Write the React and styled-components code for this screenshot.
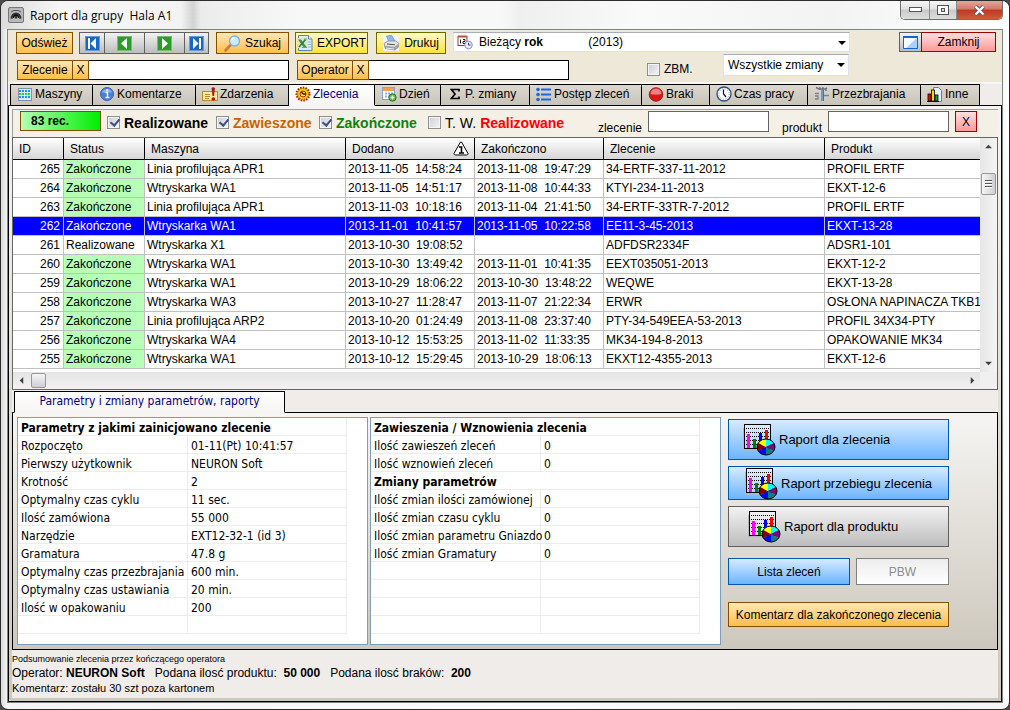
import React, {useState} from 'react';
import styled, {createGlobalStyle} from "styled-components";

const GlobalStyle = createGlobalStyle`
  * {
    box-sizing: border-box;
  }

  body {
    margin: 0;
    background: #4a4a4a;
    font-family: "Liberation Sans", Arial, sans-serif;
    font-size: 12px;
    color: #000;
  }

  button, input, select {
    font-family: inherit;
    font-size: inherit;
    color: inherit;
    margin: 0;
    padding: 0;
    border-radius: 0;
  }
`

const Window = styled.div`
  min-height: 100vh;
  display: flex;
  flex-direction: column;
  padding: 0 6px 6px;
  border: 1px solid #2c2c2c;
  border-radius: 8px;
  background: linear-gradient(90deg, #d9d9d9 0, #f4f4f4 6px, #fbfbfb 50%, #f4f4f4 99%, #fff 100%);
`

const TitleBar = styled.header`
  height: 28px;
  display: flex;
  align-items: center;
  margin: 0 -6px;
  padding-left: 7px;
  border-radius: 8px 8px 0 0;
  background: linear-gradient(90deg, #dcdcdc 0, #f6f6f6 60px, #f3f3f3 180px, #d2d2d2 192px, #ececec 200px, #f8f8f8 300px, #f8f8f8 500px, #efefef 520px, #fafafa 640px, #f3f3f3 830px, #fff 100%);
`

const Title = styled.h1`
  flex: 1;
  margin: 0 0 0 6px;
  font-family: "Open Sans", "Noto Sans", sans-serif;
  font-size: 12px;
  font-weight: normal;
  white-space: pre;
`

const WindowButtons = styled.div`
  align-self: flex-start;
  display: flex;
  margin-right: 6px;
  border: 1px solid #6e6e6e;
  border-top: 0;
  border-radius: 0 0 5px 5px;
  overflow: hidden;
`

const WindowButton = styled.button`
  width: ${p => p.$width}px;
  height: 18px;
  display: flex;
  align-items: center;
  justify-content: center;
  border: 0;
  border-left: ${p => p.$first ? 0 : "1px solid #8a8a8a"};
  background: ${p => p.$close
    ? "linear-gradient(#e3a79c 0, #d2796a 45%, #bd3a22 50%, #cf5a3c 100%)"
    : "linear-gradient(#f5f5f5 0, #e2e2e2 45%, #c8c8c8 50%, #dedede 100%)"};
`

const Client = styled.main`
  flex: 1;
  display: flex;
  flex-direction: column;
  border: 1px solid #7d8581;
  background: #f0ece9;
`

const Toolbar = styled.div`
  height: 54px;
  padding: 2px 6px 0 8px;
  background: #eee8d9;
  border-bottom: 2px solid #f8f7f5;
`

const ToolRow = styled.div`
  display: flex;
  height: 22px;
`

const LookupRow = styled.div`
  display: flex;
  align-items: flex-end;
  gap: 8px;
  height: 26px;
  padding: 0 147px 0 1px;
`

const tones = {
    orange: ["#805000", "#ffe7b8", "#ffbe48"],
    yellow: ["#6f6a00", "#fffbc8", "#ffe23a"],
    grey: ["#606060", "#f2f2f2", "#bdbdbd"],
    red: ["#a00000", "#ffe0e0", "#ff9898"],
    blue: ["#0058b0", "#d6ebff", "#6cb4ff"],
    white: ["#808080", "#ededed", "#ffffff"],
}

const Button = styled.button`
  height: ${p => p.$height || 22}px;
  width: ${p => p.$width ? p.$width + "px" : "auto"};
  flex: ${p => p.$grow ? 1 : "none"};
  display: flex;
  align-items: center;
  justify-content: center;
  gap: 4px;
  margin-left: ${p => p.$joined ? "-1px" : 0};
  border: 1px solid ${p => tones[p.$tone][0]};
  background: linear-gradient(${p => tones[p.$tone][1]}, ${p => tones[p.$tone][2]});
  font-size: 12px;
  white-space: nowrap;

  &:disabled {
    color: #8c8c8c;
  }
`

const Group = styled.div`
  display: flex;
  margin-left: ${p => p.$before || 0}px;
  margin-right: ${p => p.$after || 0}px;
`

const Combo = styled.div`
  position: relative;
  flex: ${p => p.$grow ? 1 : "none"};
  align-self: flex-start;
  width: ${p => p.$width ? p.$width + "px" : "auto"};
  height: ${p => p.$height}px;
  background: #fff;

  &::after {
    content: "";
    position: absolute;
    right: 4px;
    top: 9px;
    border: 4px solid transparent;
    border-top-color: #000;
    border-bottom: 0;
    pointer-events: none;
  }
`

const Select = styled.select`
  width: 100%;
  height: 100%;
  padding-left: 4px;
  appearance: none;
  border: 1px solid #e0e2ea;
  border-top-color: #abadb3;
  background: transparent;
  color: ${p => p.$hideText ? "transparent" : "#000"};

  option {
    color: #000;
  }
`

const ComboFace = styled.span`
  position: absolute;
  inset: 0;
  display: flex;
  align-items: center;
  padding-left: 4px;
  pointer-events: none;
  white-space: pre;

  svg {
    margin-right: 6px;
  }

  b {
    width: 64px;
  }
`

const TextBox = styled.input`
  width: ${p => p.$width}px;
  height: ${p => p.$height || 20}px;
  padding: 0 3px;
  border: 1px solid ${p => p.$soft ? "#646464" : "#000"};
  border-left-width: ${p => p.$joined ? 0 : 1}px;
  background: #fff;
  outline: 0;
`

const CheckBox = styled.input`
  flex: none;
  width: 13px;
  height: 13px;
  appearance: none;
  border: 1px solid #8e8f8f;
  background: linear-gradient(135deg, #c9ced4, #f6f6f6);
  box-shadow: inset 0 0 0 1px #f4f4f4;

  &:checked::after {
    content: "";
    display: block;
    width: 4px;
    height: 7px;
    margin: 0 0 0 4px;
    border: solid #3c4f86;
    border-width: 0 2px 2px 0;
    transform: rotate(40deg);
  }
`

const CheckLabel = styled.label`
  display: flex;
  align-items: center;
  gap: 4px;
  width: ${p => p.$width}px;
  height: 22px;
  flex: none;
  margin-left: ${p => p.$push ? "auto" : 0};
`

const CheckText = styled.span`
  margin-top: 2px;
  font-size: 14px;
  font-weight: bold;
  color: ${p => p.$color || "#000"};
  white-space: nowrap;

  i {
    font-style: normal;
    font-weight: normal;
    color: #000;
    margin-right: 4px;
  }
`

const Tabs = styled.div`
  display: flex;
  height: 22px;
  padding-left: ${p => p.$indent}px;
  background: linear-gradient(#000, #000) bottom / 100% 1px no-repeat;
`

const Tab = styled.button`
  width: ${p => p.$width}px;
  height: 22px;
  flex: none;
  display: flex;
  align-items: center;
  justify-content: ${p => p.$centered ? "center" : "flex-start"};
  gap: 2px;
  padding: 0 0 2px ${p => p.$centered ? 0 : 6}px;
  border: 1px solid #000;
  border-left-width: ${p => p.$first ? 1 : 0}px;
  border-bottom-color: ${p => p.$active ? "#f6f5f3" : "#000"};
  background: ${p => p.$active ? "linear-gradient(#fff, #f6f5f3)" : "linear-gradient(#dcd8d0, #c8c3b7)"};
  color: ${p => p.$active ? "#000080" : "#000"};
  font-family: ${p => p.$humanist ? '"DejaVu Sans Condensed", "Noto Sans", sans-serif' : "inherit"};
  white-space: nowrap;

  svg {
    flex: none;
  }
`

const Page = styled.section`
  flex: 1;
  display: flex;
  flex-direction: column;
  padding: 3px;
  border: 1px solid #000;
  border-top: 0;
  background: linear-gradient(#f6f5f3, #cdc8bd);
`

const PageBody = styled.div`
  flex: 1;
  display: flex;
  flex-direction: column;
  background: #f0ece9;
`

const FilterBar = styled.div`
  height: 28px;
  display: flex;
  align-items: flex-start;
  padding: 1px 21px 0 7px;
  border-top: 1px solid #a0a09c;
  border-left: 1px solid #a0a09c;
  background: #f5f0e6;
`

const Counter = styled.output`
  width: 81px;
  height: 20px;
  margin-right: 6px;
  padding-left: 10px;
  border: 1px solid #805000;
  background: linear-gradient(90deg, #b4ffb4, #00ee00);
  font-weight: bold;
  line-height: 18px;
`

const FilterField = styled.div`
  display: flex;
  margin-left: ${p => p.$push ? "auto" : "13px"};
`

const FieldLabel = styled.label`
  margin-right: 6px;
  line-height: 16px;
  padding-top: 9px;
`

const GridFrame = styled.div`
  height: 253px;
  display: grid;
  grid-template-columns: 1fr 17px;
  grid-template-rows: 1fr 17px;
  border: 1px solid #646464;
  background: #fff;
`

const GridView = styled.div`
  overflow: hidden;
`

const OrdersTable = styled.table`
  width: 100%;
  table-layout: fixed;
  border-spacing: 0;
  white-space: pre;
`

const HeadCell = styled.th`
  height: 22px;
  padding: 0 5px 0 6px;
  border-right: ${p => p.$last ? 0 : "1px solid #000"};
  border-bottom: 1px solid #000;
  background: linear-gradient(#fff, #d6d6d6);
  font-weight: normal;
  text-align: left;

  div {
    display: flex;
    align-items: center;
    justify-content: space-between;
  }
`

const Row = styled.tr`
  background: ${p => p.$selected ? "#0000ff" : "#fff"};
  color: ${p => p.$selected ? "#fff" : "#000"};
`

const Cell = styled.td`
  height: 19px;
  padding: 0 3px 0 2px;
  overflow: hidden;
  border-right: ${p => p.$last ? 0 : "1px solid #c0c0c0"};
  border-bottom: 1px solid #c0c0c0;
  background: ${p => p.$done ? "#b8ffb8" : "transparent"};
  text-align: ${p => p.$right ? "right" : "left"};
`

const VScroll = styled.div`
  display: flex;
  flex-direction: column;
  align-items: center;
  background: linear-gradient(90deg, #e6e6e6, #f4f4f4);
`

const HScroll = styled.div`
  display: flex;
  align-items: center;
  background: linear-gradient(#e4e4e4, #f2f2f2);
`

const Corner = styled.div`
  background: #f0f0f0;
`

const Arrow = styled.button`
  width: 16px;
  height: 17px;
  display: flex;
  align-items: center;
  justify-content: center;
  border: 0;
  background: transparent;
`

const Thumb = styled.div`
  width: 15px;
  height: ${p => p.$tall ? 22 : 15}px;
  margin: ${p => p.$tall ? "18px 0 auto" : "0 auto 0 2px"};
  display: flex;
  flex-direction: column;
  align-items: center;
  justify-content: center;
  gap: 1px;
  border: 1px solid #979797;
  border-radius: 2px;
  background: linear-gradient(${p => p.$tall ? "90deg, " : ""}#f5f5f5, #d0d0d4);

  span {
    width: 7px;
    height: 2px;
    background: #fff;
    border-top: 1px solid #555;
  }
`

const SubTabs = styled(Tabs)`
  margin-top: 1px;
`

const SubPage = styled.div`
  display: flex;
  align-items: flex-start;
  padding: 4px;
  border: 1px solid #000;
  border-top: 0;
  background: linear-gradient(#f6f5f3, #cdc8bd);
`

const InfoBox = styled.div`
  width: 351px;
  height: 228px;
  margin-right: 2px;
  border: 1px solid #7f9db9;
  background: #fff;
`

const InfoTable = styled.table`
  width: 329px;
  table-layout: fixed;
  border-spacing: 0;
  font-family: "DejaVu Sans Condensed", "Noto Sans", sans-serif;
  font-size: 12px;
  white-space: nowrap;

  th, td {
    height: 18px;
    padding: 4px 3px 0;
    line-height: 13px;
    border-right: 1px solid #ececec;
    border-bottom: 1px solid #ececec;
    text-align: left;
  }

  th[scope="row"] {
    padding-right: 0;
    font-weight: normal;
  }
`

const Actions = styled.div`
  width: 221px;
  margin: 2px 0 0 5px;
  display: flex;
  flex-direction: column;
`

const ReportButton = styled(Button)`
  justify-content: flex-start;
  gap: 3px;
  padding-left: ${p => p.$indent}px;
  margin-bottom: 6px;
  font-size: 13px;
`

const ActionRow = styled.div`
  display: flex;
  gap: 6px;
  margin: 5px 0 17px;
`

const Summary = styled.footer`
  padding-top: 3px;
`

const SummaryLine = styled.p`
  margin: 0;
  font-size: ${p => p.$size}px;
  line-height: ${p => p.$line}px;
  white-space: pre;
`

/* icons */

const AppIcon = () => (
    <svg width="16" height="16" viewBox="0 0 16 16">
        <rect x=".5" y=".5" width="15" height="15" rx="1.5" fill="#b9b9b9" stroke="#777"/>
        <path d="M2.500 11.500a5.500 6 0 0 1 11 0l-2 .5a3.500 4 0 0 0-7 0z" fill="#333"/>
        <path d="M5.500 11a2.500 3 0 0 1 5 0M8 8.500v3" stroke="#111" strokeWidth="1.500" fill="none"/>
        <path d="M3 5l3-1.500h4L13 5" stroke="#555" fill="none"/>
    </svg>
)

const NavIcon = ({color, dir, bar}) => (
    <svg width="15" height="15" viewBox="0 0 15 15">
        <rect width="15" height="15" fill={color}/>
        <rect x=".5" y=".5" width="14" height="14" fill="none" stroke="#fff" strokeOpacity=".35"/>
        <g transform={dir === "right" ? "matrix(-1 0 0 1 15 0)" : undefined}>
            <path d={bar ? "M11 2v11L5.500 7.500z" : "M10 2v11L4 7.500z"} fill="#fff"/>
            {bar && <rect x="3" y="2" width="2" height="11" fill="#fff"/>}
        </g>
    </svg>
)

const SearchIcon = () => (
    <svg width="17" height="17" viewBox="0 0 17 17">
        <path d="M1.500 15.500L7 9.500" stroke="#d9773a" strokeWidth="2.600" strokeLinecap="round"/>
        <circle cx="10.500" cy="6" r="5" fill="#c9ebff" stroke="#7fb2de" strokeWidth="1.400"/>
        <path d="M7.500 5.500a3 3 0 0 1 3-2.500" stroke="#fff" strokeWidth="1.400" fill="none"/>
    </svg>
)

const ExcelIcon = () => (
    <svg width="16" height="16" viewBox="0 0 16 16">
        <path d="M1.500.500h10l3.500 3.500v11.500H1.500z" fill="#dcecff" stroke="#5a86c0"/>
        <path d="M11.500.500V4H15" fill="#fff" stroke="#5a86c0"/>
        <path d="M10 7h4M10 9.500h4M10 12h4" stroke="#8fb4df"/>
        <rect x="0" y="3" width="11" height="10" fill="#d8e6d0"/>
        <path d="M1 4.500h3l5.500 7.500h-3z" fill="#3f8f46"/>
        <path d="M8.500 4.500L2 12" stroke="#2f7a38" strokeWidth="1.600"/>
        <path d="M5 12.500h5M7 4h3" stroke="#6aa66a"/>
    </svg>
)

const PrintIcon = () => (
    <svg width="17" height="16" viewBox="0 0 17 16">
        <rect width="16" height="16" fill="#f4f4f4"/>
        <path d="M3.500 1l5-1 3.500 6-6 2z" fill="#8fb8f0" stroke="#6a8fd0" strokeWidth=".6"/>
        <path d="M1 8.500L5 6l8 0 3 2.500-4 4-10-1z" fill="#e2e2e2" stroke="#8b8b8b" strokeWidth=".8"/>
        <path d="M1 11l10 1.500L16 9v3l-4 3.500L2 14z" fill="#9d9d9d"/>
        <path d="M4 9l8 .8" stroke="#555"/>
        <path d="M3 13l8 1" stroke="#eee"/>
        <rect x="12" y="12" width="2" height="1" fill="#d9c000"/>
    </svg>
)

const CalendarClockIcon = () => (
    <svg width="16" height="15" viewBox="0 0 16 15">
        <rect x="1" y="1.500" width="9" height="9" fill="#fff" stroke="#a03a28"/>
        <path d="M1 1.500h9" stroke="#b0523c" strokeWidth="2"/>
        <path d="M3.500 4.500v4M6 4.500h2v2H6v2h2.500" stroke="#222" fill="none"/>
        <circle cx="11.500" cy="10" r="3.800" fill="#e5eaff" stroke="#8b90c4"/>
        <path d="M11.500 7.800V10h2" stroke="#3c3c78" fill="none"/>
    </svg>
)

const MaximizeIcon = () => (
    <svg width="15" height="13" viewBox="0 0 15 13">
        <path d="M1 1h13v11H1z" fill="#f5faff"/>
        <path d="M14 2v10H3z" fill="#a9d0fa"/>
        <path d="M.500.500h14v12H.500z" fill="none" stroke="#1565d0"/>
        <path d="M0 1h15" stroke="#1565d0" strokeWidth="2"/>
    </svg>
)

const MachinesIcon = () => (
    <svg width="16" height="13" viewBox="-1 0 16 13">
        <rect x=".5" y=".5" width="13" height="12" fill="#d8ecff" stroke="#7a93b5"/>
        {[2, 5, 8].map(y => [2, 5, 8, 11].map(x => (
            <rect key={x + "-" + y} x={x - 1} y={y} width="2" height="2" fill={y === 5 ? "#2ecc40" : "#1e90ff"}/>
        )))}
    </svg>
)

const InfoIcon = () => (
    <svg width="16" height="14" viewBox="-1 0 16 14">
        <circle cx="7" cy="7" r="6.500" fill="#4a7fd6" stroke="#3c62ac"/>
        <path d="M1.800 5.500a5.500 5 0 0 1 10.400 0z" fill="#8db4f0"/>
        <path d="M5.500 5.500H7.500V10M5.500 10.500h4" stroke="#fff" strokeWidth="1.400" fill="none"/>
        <circle cx="7.300" cy="3.200" r="1.100" fill="#fff"/>
    </svg>
)

const EventsIcon = () => (
    <svg width="16" height="15" viewBox="0 0 16 15">
        <rect x=".5" y="4.500" width="15" height="9" fill="#ffe9a0" stroke="#c08a28"/>
        <path d="M3 7.500h5M3 9.500h5M3 11.500h4" stroke="#b98a30"/>
        <path d="M9.500 1q1.500-1.500 3.500 0l-1 8h-1.500z" fill="#b01818"/>
        <circle cx="11.300" cy="12" r="1.800" fill="#b01818"/>
    </svg>
)

const GearIcon = () => (
    <svg width="16" height="16" viewBox="0 0 16 16">
        <circle cx="8" cy="8" r="6.500" fill="#ffe000" stroke="#a02000" strokeWidth="2" strokeDasharray="1.500 1.200"/>
        <circle cx="8" cy="8" r="5.300" fill="none" stroke="#c03000" strokeWidth="1" strokeDasharray="1 1"/>
        <circle cx="8" cy="8" r="3" fill="#ffe860" stroke="#a01800"/>
        <path d="M8 8L6.500 6M8 8h3" stroke="#700" strokeWidth="1.300"/>
    </svg>
)

const DayIcon = () => (
    <svg width="16" height="15" viewBox="-1 0 16 15">
        <rect x=".5" y=".5" width="12" height="12" fill="#fff" stroke="#7fa6d8"/>
        <rect x="1" y="1" width="11" height="3" fill="#f0a050"/>
        <path d="M3 6.500h2M6 6.500h2M9 6.500h2M3 9.500h2M6 9.500h2" stroke="#8ab4e4" strokeWidth="2"/>
        <circle cx="10.500" cy="10.500" r="3.700" fill="#6aa84a" stroke="#3c7424"/>
        <path d="M10.500 8.500v4M8.500 10.500h4" stroke="#e4f4d8" strokeWidth="1.400"/>
    </svg>
)

const ShiftIcon = () => (
    <svg width="16" height="12" viewBox="-3 0 16 12">
        <path d="M9 3.500V1.500H1.500L5 6l-3.500 4.500H9V8.500" fill="none" stroke="#000" strokeWidth="1.700"/>
    </svg>
)

const ProgressIcon = () => (
    <svg width="16" height="15" viewBox="0 0 16 15">
        {[2.5, 7.5, 12.5].map(y => (
            <g key={y}>
                <circle cx="2" cy={y} r="1.800" fill="#1a66e8"/>
                <path d={`M5 ${y}h10`} stroke="#1a66e8" strokeWidth="2"/>
            </g>
        ))}
    </svg>
)

const DefectsIcon = () => (
    <svg width="16" height="15" viewBox="-1 0 16 15">
        <circle cx="7" cy="7.500" r="6.800" fill="#d81818" stroke="#901010" strokeWidth=".8"/>
        <path d="M1.500 7a5.500 5.500 0 0 1 11 0q-5.500 1.500-11 0z" fill="#f08080"/>
    </svg>
)

const ClockIcon = () => (
    <svg width="16" height="16" viewBox="0 0 16 16">
        <circle cx="8" cy="8" r="7" fill="#fff" stroke="#2d4a80" strokeWidth="1.300"/>
        <circle cx="8" cy="8" r="5.200" fill="none" stroke="#6c88b8" strokeDasharray="1 1.720"/>
        <path d="M7.500 3.500V8l2.500 3" stroke="#111" strokeWidth="1.200" fill="none"/>
    </svg>
)

const ToolsIcon = () => (
    <svg width="16" height="16" viewBox="0 0 16 16">
        <path d="M7 4h3v11H7z" fill="#2f78c4"/>
        <path d="M2 1.500l3 1.500h6l2-1M6 1v3M9 1v3M12 3v2" stroke="#6c7278" strokeWidth="1.400" fill="none"/>
        <path d="M1 7.500h4M1 10h3v3H1M10 9.500h5" stroke="#7d848a" strokeWidth="1.300" fill="none"/>
        <path d="M8 4v11" stroke="#90c4f4"/>
    </svg>
)

const OtherIcon = () => (
    <svg width="16" height="15" viewBox="0 0 16 15">
        <path d="M6.500.500h5l3 3v11h-8z" fill="#e6f0ff" stroke="#5d7fb5"/>
        <rect x="1" y="7" width="3" height="7" fill="#e01010" stroke="#000" strokeWidth=".8"/>
        <rect x="4.500" y="3" width="3" height="11" fill="#ffd800" stroke="#000" strokeWidth=".8"/>
        <rect x="8" y="8" width="3" height="6" fill="#20a020" stroke="#000" strokeWidth=".8"/>
        <path d="M0 14.500h12" stroke="#000"/>
    </svg>
)

const SortIcon = () => (
    <svg width="16" height="15" viewBox="0 0 16 15">
        <path d="M7.500 1L1 12.500q0 1.500 1.500 1.500h11q1.500 0 1.500-1.500L8.500 1z" fill="#fff" stroke="#000"/>
        <path d="M6 6h2.500v6M6 12h5" stroke="#000" strokeWidth="1.600" fill="none"/>
    </svg>
)

const wedges = ["#00ffff", "#800080", "#008080", "#0000ff", "#800000", "#ffff00"]

const ReportIcon = () => (
    <svg width="33" height="33" viewBox="1 1 33 33">
        <path d="M2 6v21.500h16" stroke="#b8b8b8" strokeWidth="2" fill="none"/>
        <rect x="2.500" y="2.500" width="26" height="24" fill="#fff" fillOpacity=".3" stroke="#000"/>
        <path d="M4 6.500h24M4 10.500h24M4 14.500h24M4 18.500h24M4 22.500h24" stroke="#000" strokeDasharray="1 1"/>
        <rect x="5" y="12" width="3" height="14" fill="#ff00ff"/>
        <rect x="11" y="17" width="3" height="9" fill="#008000"/>
        <rect x="17" y="11" width="3" height="15" fill="#0000ff"/>
        <rect x="23" y="8" width="3" height="18" fill="#ff0000"/>
        {wedges.map((fill, i) => {
            const a = (i * 60 - 90) * Math.PI / 180
            const b = (i * 60 - 30) * Math.PI / 180
            return (
                <path
                    key={fill}
                    d={`M24 25L${24 + 9 * Math.cos(a)} ${25 + 8 * Math.sin(a)}A9 8 0 0 1 ${24 + 9 * Math.cos(b)} ${25 + 8 * Math.sin(b)}z`}
                    fill={fill}
                />
            )
        })}
        <ellipse cx="24" cy="25" rx="9" ry="8" fill="none" stroke="#000"/>
    </svg>
)

const arrowPaths = {
    up: "M0 6l4-4 4 4z",
    down: "M0 2l4 4 4-4z",
    left: "M6 0L2 4l4 4z",
    right: "M2 0l4 4-4 4z",
}

const ArrowIcon = ({dir}) => (
    <svg width="7" height="7" viewBox="0 0 8 8"><path d={arrowPaths[dir]} fill="#404040"/></svg>
)

/* data */

const tabs = [
    {name: "Maszyny", width: 83, icon: <MachinesIcon/>},
    {name: "Komentarze", width: 103, icon: <InfoIcon/>},
    {name: "Zdarzenia", width: 93, icon: <EventsIcon/>},
    {name: "Zlecenia", width: 86, icon: <GearIcon/>},
    {name: "Dzień", width: 66, icon: <DayIcon/>},
    {name: "P. zmiany", width: 89, icon: <ShiftIcon/>},
    {name: "Postęp zleceń", width: 112, icon: <ProgressIcon/>},
    {name: "Braki", width: 68, icon: <DefectsIcon/>},
    {name: "Czas pracy", width: 98, icon: <ClockIcon/>},
    {name: "Przezbrajania", width: 113, icon: <ToolsIcon/>},
    {name: "Inne", width: 59, icon: <OtherIcon/>},
]

const columns = [
    {name: "ID", width: 51},
    {name: "Status", width: 81},
    {name: "Maszyna", width: 201},
    {name: "Dodano", width: 129, sorted: true},
    {name: "Zakończono", width: 129},
    {name: "Zlecenie", width: 221},
    {name: "Produkt"},
]

const orders = [
    [265, "Zakończone", "Linia profilująca APR1", "2013-11-05  14:58:24", "2013-11-08  19:47:29", "34-ERTF-337-11-2012", "PROFIL ERTF"],
    [264, "Zakończone", "Wtryskarka WA1", "2013-11-05  14:51:17", "2013-11-08  10:44:33", "KTYI-234-11-2013", "EKXT-12-6"],
    [263, "Zakończone", "Linia profilująca APR1", "2013-11-03  10:18:16", "2013-11-04  21:41:50", "34-ERTF-33TR-7-2012", "PROFIL ERTF"],
    [262, "Zakończone", "Wtryskarka WA1", "2013-11-01  10:41:57", "2013-11-05  10:22:58", "EE11-3-45-2013", "EKXT-13-28"],
    [261, "Realizowane", "Wtryskarka X1", "2013-10-30  19:08:52", "", "ADFDSR2334F", "ADSR1-101"],
    [260, "Zakończone", "Wtryskarka WA1", "2013-10-30  13:49:42", "2013-11-01  10:41:35", "EEXT035051-2013", "EKXT-12-2"],
    [259, "Zakończone", "Wtryskarka WA1", "2013-10-29  18:06:22", "2013-10-30  13:48:22", "WEQWE", "EKXT-13-28"],
    [258, "Zakończone", "Wtryskarka WA3", "2013-10-27  11:28:47", "2013-11-07  21:22:34", "ERWR", "OSŁONA NAPINACZA TKB1"],
    [257, "Zakończone", "Linia profilująca ARP2", "2013-10-20  01:24:49", "2013-11-08  23:37:40", "PTY-34-549EEA-53-2013", "PROFIL 34X34-PTY"],
    [256, "Zakończone", "Wtryskarka WA4", "2013-10-12  15:53:25", "2013-11-02  11:33:35", "MK34-194-8-2013", "OPAKOWANIE MK34"],
    [255, "Zakończone", "Wtryskarka WA1", "2013-10-12  15:29:45", "2013-10-29  18:06:13", "EKXT12-4355-2013", "EKXT-12-6"],
]

const startParams = [
    ["Parametry z jakimi zainicjowano zlecenie"],
    ["Rozpoczęto", "01-11(Pt) 10:41:57"],
    ["Pierwszy użytkownik", "NEURON Soft"],
    ["Krotność", "2"],
    ["Optymalny czas cyklu", "11 sec."],
    ["Ilość zamówiona", "55 000"],
    ["Narzędzie", "EXT12-32-1 (id 3)"],
    ["Gramatura", "47.8 g"],
    ["Optymalny czas przezbrajania", "600 min."],
    ["Optymalny czas ustawiania", "20 min."],
    ["Ilość w opakowaniu", "200"],
    ["", ""],
]

const changes = [
    ["Zawieszenia / Wznowienia zlecenia"],
    ["Ilość zawieszeń zleceń", "0"],
    ["Ilość wznowień zleceń", "0"],
    ["Zmiany parametrów"],
    ["Ilość zmian ilości zamówionej", "0"],
    ["Ilość zmian czasu cyklu", "0"],
    ["Ilość zmian parametru Gniazdo", "0"],
    ["Ilość zmian Gramatury", "0"],
    ["", ""],
    ["", ""],
    ["", ""],
    ["", ""],
]

const Lookup = ({name}) => (
    <Group>
        <Button $tone="orange" $height={20} $width={56} id={"pick-" + name}>{name}</Button>
        <Button $tone="orange" $height={20} $width={17} $joined aria-label={"Wyczyść " + name}>X</Button>
        <TextBox $width={200} $joined aria-labelledby={"pick-" + name}/>
    </Group>
)

const Info = ({rows}) => (
    <InfoBox>
        <InfoTable>
            <colgroup>
                <col width="170"/>
                <col/>
            </colgroup>
            <tbody>
            {rows.map((row, i) => (
                <tr key={i}>
                    {row.length === 1
                        ? <th colSpan={2} scope="colgroup">{row[0]}</th>
                        : <>
                            <th scope="row">{row[0]}</th>
                            <td>{row[1]}</td>
                        </>}
                </tr>
            ))}
            </tbody>
        </InfoTable>
    </InfoBox>
)

const App = () => {
    const [tab, setTab] = useState("Zlecenia")
    const [selected, setSelected] = useState(262)

    return (
        <Window>
            <GlobalStyle/>
            <TitleBar>
                <AppIcon/>
                <Title>{"Raport dla grupy  Hala A1"}</Title>
                <WindowButtons>
                    <WindowButton $width={28} $first aria-label="Minimalizuj">
                        <svg width="13" height="6"><rect x=".5" y=".5" width="12" height="4" fill="#fff" stroke="#555"/></svg>
                    </WindowButton>
                    <WindowButton $width={27} aria-label="Maksymalizuj">
                        <svg width="13" height="11">
                            <rect x=".5" y=".5" width="11" height="9" fill="#fff" stroke="#555"/>
                            <rect x="4.500" y="3.500" width="3" height="3" fill="#ddd" stroke="#555"/>
                        </svg>
                    </WindowButton>
                    <WindowButton $width={46} $close aria-label="Zamknij okno">
                        <svg width="13" height="11" viewBox="0 0 13 11">
                            <path d="M2.500 1.500l8 8M10.500 1.500l-8 8" stroke="#555" strokeWidth="4"/>
                            <path d="M2.500 1.500l8 8M10.500 1.500l-8 8" stroke="#fff" strokeWidth="2.400"/>
                        </svg>
                    </WindowButton>
                </WindowButtons>
            </TitleBar>
            <Client>
                <Toolbar>
                    <ToolRow>
                        <Group $after={6}><Button $tone="orange" $width={57}>Odśwież</Button></Group>
                        <Group $after={7}>
                            <Button $tone="grey" $width={26} aria-label="Pierwszy"><NavIcon color="#1668c8" bar/></Button>
                            <Button $tone="grey" $width={41} $joined aria-label="Poprzedni"><NavIcon color="#2c9a2c"/></Button>
                            <Button $tone="grey" $width={41} $joined aria-label="Następny"><NavIcon color="#2c9a2c" dir="right"/></Button>
                            <Button $tone="grey" $width={25} $joined aria-label="Ostatni"><NavIcon color="#1668c8" dir="right" bar/></Button>
                        </Group>
                        <Group $after={6}><Button $tone="orange" $width={73}><SearchIcon/>Szukaj</Button></Group>
                        <Group $after={8}><Button $tone="yellow" $width={73}><ExcelIcon/>EXPORT</Button></Group>
                        <Group $after={7}><Button $tone="yellow" $width={70}><PrintIcon/>Drukuj</Button></Group>
                        <Combo $grow $height={20}>
                            <Select $hideText aria-label="Okres">
                                <option>Bieżący rok (2013)</option>
                            </Select>
                            <ComboFace aria-hidden="true"><CalendarClockIcon/>Bieżący <b>rok</b>(2013)</ComboFace>
                        </Combo>
                        <Group $before={49}>
                            <Button $tone="grey" $height={20} $width={23} aria-label="Powiększ"><MaximizeIcon/></Button>
                            <Button $tone="red" $height={20} $width={75} $joined>Zamknij</Button>
                        </Group>
                    </ToolRow>
                    <LookupRow>
                        <Lookup name="Zlecenie"/>
                        <Lookup name="Operator"/>
                        <CheckLabel $width={68} $push>
                            <CheckBox type="checkbox"/>ZBM.
                        </CheckLabel>
                        <Combo $width={126} $height={22}>
                            <Select aria-label="Zmiany">
                                <option>Wszystkie zmiany</option>
                            </Select>
                        </Combo>
                    </LookupRow>
                </Toolbar>
                <Tabs role="tablist" $indent={2}>
                    {tabs.map((t, i) => (
                        <Tab
                            key={t.name}
                            role="tab"
                            aria-selected={t.name === tab}
                            $active={t.name === tab}
                            $first={i === 0}
                            $width={t.width}
                            onClick={() => setTab(t.name)}
                        >
                            {t.icon}{t.name}
                        </Tab>
                    ))}
                </Tabs>
                <Page>
                    <PageBody>
                        <FilterBar>
                            <Counter>83 rec.</Counter>
                            <CheckLabel $width={109}>
                                <CheckBox type="checkbox" defaultChecked/>
                                <CheckText>Realizowane</CheckText>
                            </CheckLabel>
                            <CheckLabel $width={103}>
                                <CheckBox type="checkbox" defaultChecked/>
                                <CheckText $color="#c86400">Zawieszone</CheckText>
                            </CheckLabel>
                            <CheckLabel $width={109}>
                                <CheckBox type="checkbox" defaultChecked/>
                                <CheckText $color="#108010">Zakończone</CheckText>
                            </CheckLabel>
                            <CheckLabel $width={140}>
                                <CheckBox type="checkbox"/>
                                <CheckText $color="#ff0000"><i>T. W.</i>Realizowane</CheckText>
                            </CheckLabel>
                            <FilterField $push>
                                <FieldLabel htmlFor="filter-order">zlecenie</FieldLabel>
                                <TextBox id="filter-order" $soft $width={121} $height={21}/>
                            </FilterField>
                            <FilterField>
                                <FieldLabel htmlFor="filter-product">produkt</FieldLabel>
                                <TextBox id="filter-product" $soft $width={121} $height={21}/>
                            </FilterField>
                            <Group $before={6}>
                                <Button $tone="red" $height={21} $width={22} aria-label="Wyczyść filtr">X</Button>
                            </Group>
                        </FilterBar>
                        <GridFrame>
                            <GridView>
                                <OrdersTable>
                                    <colgroup>
                                        {columns.map(c => <col key={c.name} width={c.width}/>)}
                                    </colgroup>
                                    <thead>
                                    <tr>
                                        {columns.map((c, i) => (
                                            <HeadCell key={c.name} $last={i === columns.length - 1}>
                                                <div>{c.name}{c.sorted && <SortIcon/>}</div>
                                            </HeadCell>
                                        ))}
                                    </tr>
                                    </thead>
                                    <tbody>
                                    {orders.map(order => (
                                        <Row key={order[0]} $selected={order[0] === selected} onClick={() => setSelected(order[0])}>
                                            {order.map((value, i) => (
                                                <Cell
                                                    key={i}
                                                    $right={i === 0}
                                                    $last={i === order.length - 1}
                                                    $done={i === 1 && value === "Zakończone" && order[0] !== selected}
                                                >
                                                    {value}
                                                </Cell>
                                            ))}
                                        </Row>
                                    ))}
                                    </tbody>
                                </OrdersTable>
                            </GridView>
                            <VScroll>
                                <Arrow aria-label="W górę"><ArrowIcon dir="up"/></Arrow>
                                <Thumb $tall><span/><span/><span/></Thumb>
                                <Arrow aria-label="W dół"><ArrowIcon dir="down"/></Arrow>
                            </VScroll>
                            <HScroll>
                                <Arrow aria-label="W lewo"><ArrowIcon dir="left"/></Arrow>
                                <Thumb/>
                                <Arrow aria-label="W prawo"><ArrowIcon dir="right"/></Arrow>
                            </HScroll>
                            <Corner/>
                        </GridFrame>
                        <SubTabs role="tablist" $indent={2}>
                            <Tab role="tab" aria-selected $active $first $centered $humanist $width={271}>
                                Parametry i zmiany parametrów, raporty
                            </Tab>
                        </SubTabs>
                        <SubPage>
                            <Info rows={startParams}/>
                            <Info rows={changes}/>
                            <Actions>
                                <ReportButton $tone="blue" $height={41} $indent={14}><ReportIcon/>Raport dla zlecenia</ReportButton>
                                <ReportButton $tone="blue" $height={34} $indent={16}><ReportIcon/>Raport przebiegu zlecenia</ReportButton>
                                <ReportButton $tone="grey" $height={41} $indent={19}><ReportIcon/>Raport dla produktu</ReportButton>
                                <ActionRow>
                                    <Button $tone="blue" $height={27} $width={122}>Lista zleceń</Button>
                                    <Button $tone="white" $height={27} $grow disabled>PBW</Button>
                                </ActionRow>
                                <Button $tone="orange" $height={25}>Komentarz dla zakończonego zlecenia</Button>
                            </Actions>
                        </SubPage>
                        <Summary>
                            <SummaryLine $size={9} $line={12}>Podsumowanie zlecenia przez kończącego operatora</SummaryLine>
                            <SummaryLine $size={12} $line={16}>
                                Operator: <b>NEURON Soft</b>{"   Podana ilosć produktu:  "}<b>50 000</b>{"   Podana ilosć braków:  "}<b>200</b>
                            </SummaryLine>
                            <SummaryLine $size={11} $line={15}>Komentarz: zostału 30 szt poza kartonem</SummaryLine>
                        </Summary>
                    </PageBody>
                </Page>
            </Client>
        </Window>
    );
};

export default App;
